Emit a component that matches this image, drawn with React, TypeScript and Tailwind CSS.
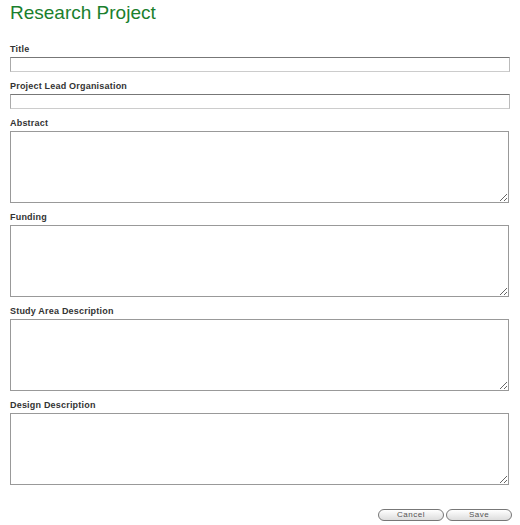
import React from "react";

const font = { fontFamily: '"Liberation Sans", Arial, sans-serif' };

function Label({ children }: { children: React.ReactNode }) {
  return (
    <div className="h-[12px] text-[9px] leading-[12px] font-bold text-[#333] tracking-[0.2px]">
      {children}
    </div>
  );
}

function Input() {
  return (
    <div className="mt-[2px] mb-[8px] h-[15px] w-[500px] border-t border-t-[#777] border-l border-l-[#aaa] border-r border-r-[#bbb] border-b border-b-[#ccc] bg-white" />
  );
}

function Area() {
  return (
    <textarea className="block mt-[2px] mb-[8px] h-[72px] w-[499px] border border-[#999] bg-white resize-y outline-none" />
  );
}

export default function App() {
  return (
    <div className="w-[520px] h-[525px] bg-white pl-[10px] pr-[8px]" style={font}>
      <h1 className="pt-[1px] text-[19px] leading-[24px] text-[#1a7f2e] font-normal">Research Project</h1>
      <div className="mt-[18px]">
        <Label>Title</Label>
        <Input />
        <Label>Project Lead Organisation</Label>
        <Input />
        <Label>Abstract</Label>
        <Area />
        <Label>Funding</Label>
        <Area />
        <Label>Study Area Description</Label>
        <Area />
        <Label>Design Description</Label>
        <Area />
      </div>
      <div className="flex justify-end gap-[2px] mt-[24px]">
        <button className="h-[12px] w-[66px] rounded-full border border-[#777] bg-gradient-to-b from-white to-[#ddd] text-[8px] leading-[10px] text-[#555] tracking-[0.5px]">
          Cancel
        </button>
        <button className="h-[12px] w-[66px] rounded-full border border-[#777] bg-gradient-to-b from-white to-[#ddd] text-[8px] leading-[10px] text-[#555] tracking-[0.5px]">
          Save
        </button>
      </div>
    </div>
  );
}
